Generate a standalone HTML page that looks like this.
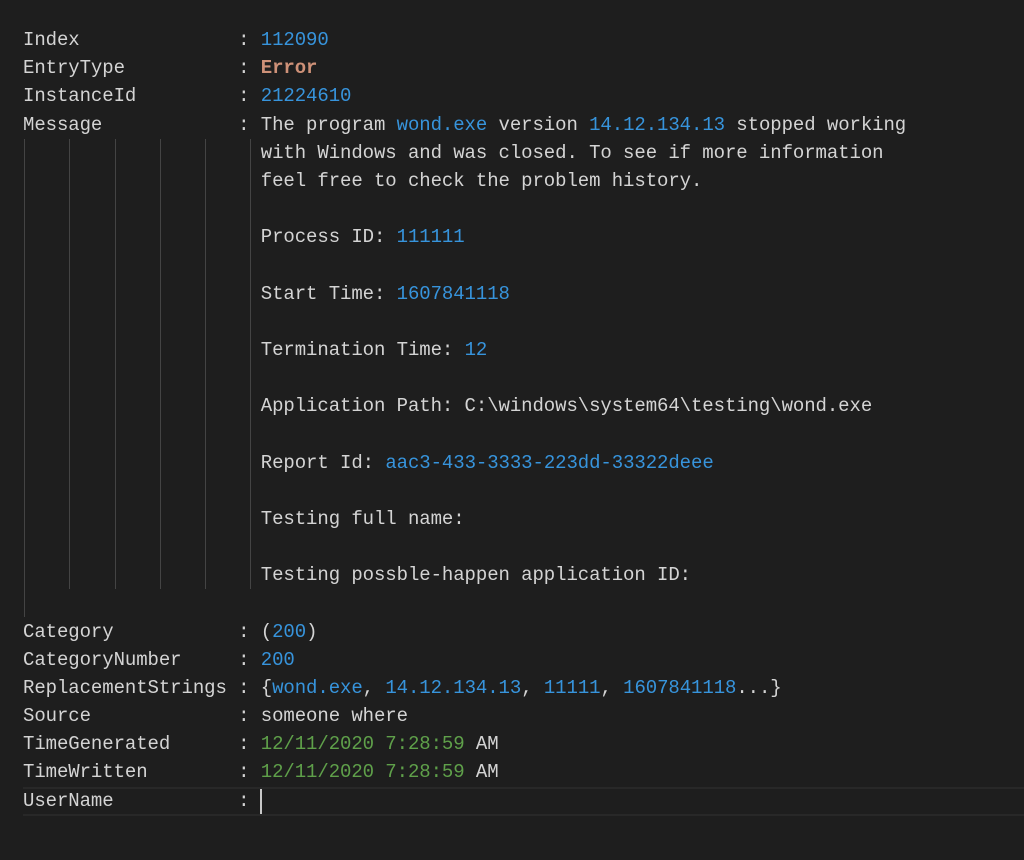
<!DOCTYPE html>
<html><head><meta charset="utf-8"><style>
html,body{margin:0;padding:0;background:#1e1e1e;width:1024px;height:860px;overflow:hidden}
#c{position:absolute;left:23px;top:26px;font-family:"Liberation Mono",monospace;font-size:19px;letter-spacing:-0.08px;line-height:28.17px;color:#d4d4d4;white-space:pre}
.b{color:#3794dc}.g{color:#5fa04a}.e{color:#ce9178;font-weight:bold}
.gd{position:absolute;width:1px;background:#444}
#hl{position:absolute;left:23px;right:0;top:787px;height:25px;border-top:2px solid #282828;border-bottom:2px solid #282828}
#cur{position:absolute;left:260px;top:789px;width:2px;height:25px;background:#c8c8c8}
</style></head><body>
<div id="hl"></div>
<div class="gd" style="left:24px;top:139px;height:478px"></div>
<div class="gd" style="left:69px;top:139px;height:450px"></div>
<div class="gd" style="left:115px;top:139px;height:450px"></div>
<div class="gd" style="left:160px;top:139px;height:450px"></div>
<div class="gd" style="left:205px;top:139px;height:450px"></div>
<div class="gd" style="left:250px;top:139px;height:450px"></div>
<div id="c">Index              : <span class="b">112090</span>
EntryType          : <span class="e">Error</span>
InstanceId         : <span class="b">21224610</span>
Message            : The program <span class="b">wond.exe</span> version <span class="b">14.12.134.13</span> stopped working
                     with Windows and was closed. To see if more information
                     feel free to check the problem history.

                     Process ID: <span class="b">111111</span>

                     Start Time: <span class="b">1607841118</span>

                     Termination Time: <span class="b">12</span>

                     Application Path: C:\windows\system64\testing\wond.exe

                     Report Id: <span class="b">aac3-433-3333-223dd-33322deee</span>

                     Testing full name:

                     Testing possble-happen application ID:

Category           : (<span class="b">200</span>)
CategoryNumber     : <span class="b">200</span>
ReplacementStrings : {<span class="b">wond.exe</span>, <span class="b">14.12.134.13</span>, <span class="b">11111</span>, <span class="b">1607841118</span>...}
Source             : someone where
TimeGenerated      : <span class="g">12/11/2020 7:28:59</span> AM
TimeWritten        : <span class="g">12/11/2020 7:28:59</span> AM
UserName           : </div>
<div id="cur"></div>
</body></html>
